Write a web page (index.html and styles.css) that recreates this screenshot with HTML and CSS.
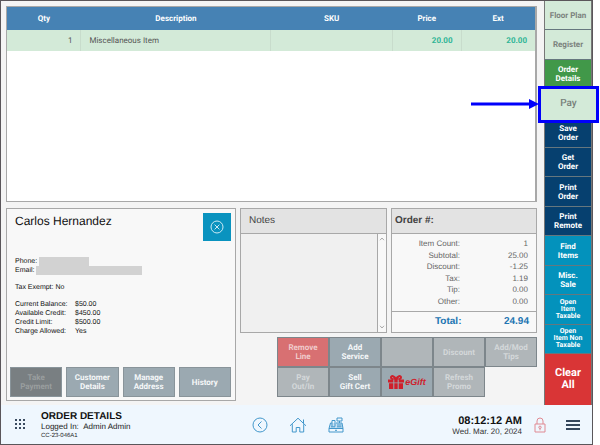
FILE: index.html
```
<!DOCTYPE html>
<html lang="en">
<head>
<meta charset="utf-8">
<title>Order Details</title>
<link rel="stylesheet" href="styles.css">
</head>
<body>
<div class="app">
  <div class="workspace">
    <main class="content">
      <section class="items panel">
        <table class="items-table">
          <colgroup><col class="col-qty"><col class="col-desc"><col class="col-sku"><col class="col-price"><col class="col-ext"></colgroup>
          <thead><tr><th>Qty</th><th>Description</th><th>SKU</th><th>Price</th><th>Ext</th></tr></thead>
          <tbody><tr><td class="num">1</td><td>Miscellaneous Item</td><td></td><td class="money">20.00</td><td class="money">20.00</td></tr></tbody>
        </table>
      </section>

      <div class="details">
        <section class="customer panel">
          <header class="customer-head">
            <h2>Carlos Hernandez</h2>
            <button class="remove" type="button" aria-label="Remove customer">
              <svg viewBox="0 0 14 14" width="14" height="14"><circle cx="7" cy="7" r="6"/><path d="M4.6 4.6l4.8 4.8M9.4 4.6l-4.8 4.8"/></svg>
            </button>
          </header>
          <div class="customer-info">
            <p class="contact">Phone: <span class="redacted phone"></span></p>
            <p class="contact">Email: <span class="redacted email"></span></p>
            <p class="exempt">Tax Exempt: No</p>
            <dl>
              <dt>Current Balance:</dt><dd>$50.00</dd>
              <dt>Available Credit:</dt><dd>$450.00</dd>
              <dt>Credit Limit:</dt><dd>$500.00</dd>
              <dt>Charge Allowed:</dt><dd>Yes</dd>
            </dl>
          </div>
          <div class="customer-actions">
            <button class="tile dark" type="button" disabled>Take<br>Payment</button>
            <button class="tile" type="button">Customer<br>Details</button>
            <button class="tile" type="button">Manage<br>Address</button>
            <button class="tile" type="button">History</button>
          </div>
        </section>

        <section class="notes panel">
          <label class="panel-title" for="notes">Notes</label>
          <div class="notes-body">
            <textarea id="notes"></textarea>
            <div class="scroll">
              <svg viewBox="0 0 6 4" width="6" height="4"><path d="M1 3.2L3 1l2 2.200"/></svg>
              <svg viewBox="0 0 6 4" width="6" height="4"><path d="M1 .8L3 3 5 .8"/></svg>
            </div>
          </div>
        </section>

        <section class="order panel">
          <h2 class="panel-title strong">Order #:</h2>
          <table class="totals">
            <tbody>
              <tr><th>Item Count:</th><td>1</td></tr>
              <tr><th>Subtotal:</th><td>25.00</td></tr>
              <tr><th>Discount:</th><td>-1.25</td></tr>
              <tr><th>Tax:</th><td>1.19</td></tr>
              <tr><th>Tip:</th><td>0.00</td></tr>
              <tr><th>Other:</th><td>0.00</td></tr>
            </tbody>
          </table>
          <p class="grand"><span>Total:</span><span>24.94</span></p>
        </section>

        <div class="order-actions">
          <button class="tile red" type="button" disabled>Remove<br>Line</button>
          <button class="tile" type="button">Add<br>Service</button>
          <button class="tile off" type="button" disabled aria-label="Unassigned"></button>
          <button class="tile off" type="button" disabled>Discount</button>
          <button class="tile off" type="button" disabled>Add/Mod<br>Tips</button>
          <button class="tile off" type="button" disabled>Pay<br>Out/In</button>
          <button class="tile" type="button">Sell<br>Gift Cert</button>
          <button class="tile gift" type="button">
            <svg viewBox="0 0 16 14" width="16" height="14"><path class="fill" d="M0 4.500h16v3H0zM1 8.200h14V14H1z"/><path class="bow" d="M8 4.500C6.500 1 3 0 3 2.500c0 1.500 2.500 2 5 2zM8 4.500C9.500 1 13 0 13 2.500c0 1.500-2.500 2-5 2z"/><path class="ribbon" d="M5.800 4.500V14M10.200 4.500V14"/></svg>
            <span>eGift</span>
          </button>
          <button class="tile off" type="button" disabled>Refresh<br>Promo</button>
        </div>
      </div>
    </main>

    <nav class="side">
      <button class="pale" type="button">Floor Plan</button>
      <button class="pale" type="button">Register</button>
      <button class="green" type="button">Order<br>Details</button>
      <div class="pay-slot">
        <button class="pay" type="button">Pay</button>
        <svg class="pointer" viewBox="0 0 68 12" width="68" height="12"><path d="M0 4.500h58V1l10 5-10 5V7.500H0z"/></svg>
      </div>
      <button class="navy" type="button">Save<br>Order</button>
      <button class="navy" type="button">Get<br>Order</button>
      <button class="navy" type="button">Print<br>Order</button>
      <button class="navy" type="button">Print<br>Remote</button>
      <button class="teal" type="button">Find<br>Items</button>
      <button class="teal" type="button">Misc.<br>Sale</button>
      <button class="teal small" type="button">Open<br>Item<br>Taxable</button>
      <button class="teal small" type="button">Open<br>Item Non<br>Taxable</button>
      <button class="clear" type="button">Clear<br>All</button>
    </nav>
  </div>

  <footer class="bar">
    <div class="bar-left">
      <button class="icon" type="button" aria-label="Apps">
        <svg viewBox="0 0 11 11" width="11" height="11" fill="#3b4b60"><path d="M0 0h2v2H0zM4 0h2v2H4zM8 0h2v2H8zM0 4h2v2H0zM4 4h2v2H4zM8 4h2v2H8zM0 8h2v2H0zM4 8h2v2H4zM8 8h2v2H8z"/></svg>
      </button>
      <div class="session">
        <h1>ORDER DETAILS</h1>
        <p>Logged In: &nbsp;Admin Admin</p>
        <p class="terminal">CC-23-046A1</p>
      </div>
    </div>
    <div class="bar-center">
      <button class="icon line" type="button" aria-label="Back">
        <svg viewBox="0 0 16 16" width="16" height="16"><circle cx="8" cy="8" r="7"/><path d="M9.500 4.500L6 8l3.500 3.500"/></svg>
      </button>
      <button class="icon line" type="button" aria-label="Home">
        <svg viewBox="0 0 18 16" width="18" height="16"><path d="M1 8.800L9 1.200l8 7.600M3.300 7.200V15h3.900v-4.500h3.600V15h3.900V7.200M14.500 6V2.500"/></svg>
      </button>
      <button class="icon line" type="button" aria-label="Register">
        <svg viewBox="0 0 16 16" width="16" height="16"><path class="tint" d="M2.500 6h11.500l1 5.500H1z"/><path d="M1 11.500h14V15H1zM1 11.500L2.500 6H4M14 6l1 5.500M4 9.500V3.500h3v6M9 1h5v3H9zM11.500 4v2M8 6h6M9 8h4.500M9 9.800h4.500M3 9.800h4M7 13.300h2"/></svg>
      </button>
    </div>
    <div class="bar-right">
      <div class="clock"><p class="time">08:12:12 AM</p><p class="date">Wed. Mar. 20, 2024</p></div>
      <button class="icon lock" type="button" aria-label="Lock">
        <svg viewBox="0 0 12 16" width="12" height="16"><path d="M1 7h10v8H1zM3 7V4a3 3 0 0 1 6 0v3"/><circle cx="6" cy="10.300" r="1.200"/><path d="M6 11.500v1.800"/></svg>
      </button>
      <button class="icon" type="button" aria-label="Menu">
        <svg viewBox="0 0 14 12" width="14" height="12" fill="#34475c"><path d="M0 1h14v2H0zM0 5h14v2H0zM0 9h14v2H0z"/></svg>
      </button>
    </div>
  </footer>
</div>
</body>
</html>
```
FILE: styles.css
```
* { box-sizing: border-box; }
body, h1, h2, p, dl, dd { margin: 0; }
body { background: #fff; font: 8px/9px "Liberation Sans", Arial, sans-serif; color: #333; text-rendering: geometricPrecision; }
button { margin: 0; padding: 0; border: 0; background: none; font: bold 8px/9px Roboto, sans-serif; color: #fff; text-rendering: inherit; }
svg { display: block; }

.app { display: flex; flex-direction: column; min-height: 100vh; margin-right: 7px; border: 1px solid #5a565a; background: #f4f4f4; }
.workspace { flex: 1; display: grid; grid-template-columns: minmax(0, 1fr) 48px; }
.content { display: flex; flex-direction: column; gap: 6px; padding: 5px 7px 4px 5px; }
.panel { border: 1px solid #a8a8a8; background: #f8f8f8; }

.items { flex: 1; border-right-width: 2px; background: #fff; }
.items-table { width: 100%; table-layout: fixed; border-collapse: collapse; }
.col-qty { width: 14%; }
.col-desc { width: 36%; }
.col-sku { width: 23%; }
.col-price { width: 13%; }
.items-table th { height: 23px; padding: 0; background: #4682b4; color: #fff; font: bold 8px/10px Roboto, sans-serif; }
.items-table td { height: 21px; padding: 0 8px; background: #d3ead8; border-left: 1px solid #c8dccc; font: 8px/10px Roboto, sans-serif; color: #555; }
.items-table td:first-child { border-left: 0; }
.items-table .num { text-align: right; }
.items-table .money { text-align: right; font-weight: bold; color: #2fb596; }

.details { display: grid; grid-template-columns: 230fr 147fr 146fr; grid-template-rows: auto 1fr; gap: 4px; }
.customer { grid-row: 1 / 3; display: flex; flex-direction: column; padding: 4px 4px 3px 3px; }
.customer-head { display: flex; justify-content: space-between; padding-left: 5px; }
.customer-head h2 { padding-top: 1px; font: 12px/15px "Liberation Sans", Arial, sans-serif; color: #111; }
.remove { display: grid; place-items: center; width: 28px; height: 28px; background: #0a93bf; }
.remove svg { fill: none; stroke: #cdeaf4; stroke-width: 1; }
.customer-info { flex: 1; padding: 16px 5px 0; font-size: 7px; color: #111; }
.contact { display: flex; gap: 2px; align-items: center; }
.redacted { height: 9px; background: #d2d2d2; }
.phone { width: 50px; }
.email { width: 106px; }
.exempt { padding: 8px 0; }
.customer-info dl { display: grid; grid-template-columns: 60px 1fr; }
.customer-actions { display: grid; grid-template-columns: repeat(4, 1fr); gap: 4px; }

.tile { height: 30px; border: 1px solid #7d868b; background: #9ba9b1; color: #f6f8f9; }
.customer-actions .tile { border-color: #89949a; }
.tile.dark { background: #797f82; color: #999e9f; }
.tile.off { background: #b0b6b9; color: #d4d8da; }
.tile.red { background: #d87072; color: #f0cccc; }

.panel-title { display: block; padding: 0 8px; border-bottom: 1px solid #a8a8a8; background: #e3e3e3; font: 10px/24px "Liberation Sans", Arial, sans-serif; color: #444; }
.panel-title.strong { padding: 0 3px; font-weight: bold; }
.notes { display: flex; flex-direction: column; }
.notes-body { flex: 1; display: flex; }
.notes textarea { flex: 1; min-width: 0; height: auto; padding: 4px; border: 0; border-right: 1px solid #a8a8a8; background: #f0f0f0; resize: none; font: inherit; }
.scroll { display: flex; flex-direction: column; justify-content: space-between; width: 8px; padding: 3px 1px; }
.scroll svg { fill: none; stroke: #aaa; }

.totals { width: 100%; margin: 4px 0; border-collapse: collapse; color: #666; }
.totals th, .totals td { height: 11px; padding: 0; font-weight: normal; text-align: right; line-height: 11px; }
.totals tr:nth-child(even) > * { height: 12px; }
.totals th { width: 68px; }
.totals td { padding-right: 8px; }
.grand { display: flex; justify-content: space-between; padding: 0 7px 0 43px; border-top: 1px solid #a8a8a8; font: bold 10px/20px "Liberation Sans", Arial, sans-serif; color: #2175b2; }

.order-actions { grid-column: 2 / 4; justify-self: end; display: grid; grid-template-columns: repeat(5, 52px); align-content: start; padding-bottom: 4px; }
.gift { display: flex; align-items: center; justify-content: center; gap: 1px; color: #cf202b; }
.gift span { font: italic bold 9px/12px "Liberation Sans", Arial, sans-serif; }
.fill { fill: #cf202b; }
.bow { fill: none; stroke: #cf202b; stroke-width: 2; }
.ribbon { stroke: #9ba9b1; stroke-width: 1; }

.side { display: grid; grid-template-rows: repeat(12, 1fr) 51px; border-left: 1px solid #777; border-right: 1px solid #777; }
.side button { border-bottom: 1px solid #66777e; }
.side .pale { background: #d3ead8; color: #7b827d; }
.side .green { background: #419849; }
.side .navy { background: #06406f; }
.side .teal { background: #0392bc; }
.side .small { font-size: 7px; line-height: 7px; }
.side .clear { border-bottom: 0; background: #d93536; font-size: 11px; line-height: 12px; }
.pay-slot { position: relative; background: #d3ead8; }
.side .pay { position: absolute; z-index: 1; inset: -3px -8px -4px -7px; border: 3px solid #0000fb; background: #d3ead8; color: #77807a; font-size: 10px; line-height: 12px; font-weight: 500; }
.pointer { position: absolute; right: calc(100% + 6px); top: 50%; margin-top: -6px; fill: #0000fb; }

.bar { display: grid; grid-template-columns: 1fr auto 1fr; align-items: center; height: 39px; padding: 0 12px 0 14px; background: #eff7fe; }
.bar-left, .bar-center, .bar-right { display: flex; align-items: center; }
.bar-left { gap: 15px; }
.bar-center { gap: 21px; }
.bar-right { justify-content: flex-end; gap: 12px; }
.line svg { fill: none; stroke: #4297cb; stroke-width: 1; }
.line .tint { fill: #c5e0f3; stroke: none; }
.lock svg { fill: none; stroke: #e08a93; stroke-width: 1; }
.session { padding-top: 4px; color: #222; }
.session h1 { font: bold 10px/10px "Liberation Sans", Arial, sans-serif; color: #111; }
.session .terminal { font-size: 6px; line-height: 10px; }
.clock { padding-top: 2px; text-align: right; color: #333; }
.time { font: bold 11px/11px "Liberation Sans", Arial, sans-serif; color: #111; }
.bar-right .lock { margin-right: 8px; }
```
